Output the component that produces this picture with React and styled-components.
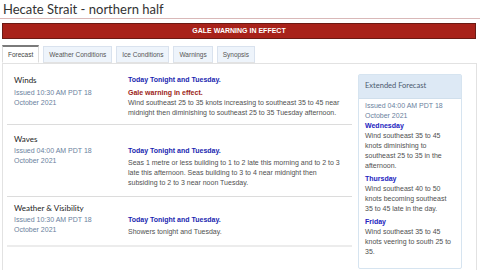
import React from "react";
import styled, { createGlobalStyle } from "styled-components";

const GlobalStyle = createGlobalStyle`
  html, body {
    margin: 0;
    padding: 0;
    background: #fff;
  }
  body {
    font-family: "Liberation Sans", Arial, sans-serif;
    width: 480px;
    height: 270px;
    overflow: hidden;
  }
`;

const tabs = ["Forecast", "Weather Conditions", "Ice Conditions", "Warnings", "Synopsis"];

const rows = [
  {
    label: "Winds",
    issued: "Issued 10:30 AM PDT 18 October 2021",
    heading: "Today Tonight and Tuesday.",
    warning: "Gale warning in effect.",
    text: "Wind southeast 25 to 35 knots increasing to southeast 35 to 45 near midnight then diminishing to southeast 25 to 35 Tuesday afternoon.",
    pad: "11px 0 6px 7px",
    gap: 3,
    offset: 0,
  },
  {
    label: "Waves",
    issued: "Issued 04:00 AM PDT 18 October 2021",
    heading: "Today Tonight and Tuesday.",
    text: "Seas 1 metre or less building to 1 to 2 late this morning and to 2 to 3 late this afternoon. Seas building to 3 to 4 near midnight then subsiding to 2 to 3 near noon Tuesday.",
    pad: "9px 0 8px 7px",
    gap: 2,
    offset: 12,
  },
  {
    label: "Weather & Visibility",
    issued: "Issued 10:30 AM PDT 18 October 2021",
    heading: "Today Tonight and Tuesday.",
    text: "Showers tonight and Tuesday.",
    pad: "6px 0 8px 7px",
    gap: 2,
    offset: 12,
    last: true,
  },
];

const extended = [
  { day: "Wednesday", text: "Wind southeast 35 to 45 knots diminishing to southeast 25 to 35 in the afternoon." },
  { day: "Thursday", text: "Wind southeast 40 to 50 knots becoming southeast 35 to 45 late in the day." },
  { day: "Friday", text: "Wind southeast 35 to 45 knots veering to south 25 to 35." },
];

export default function App() {
  return (
    <Page>
      <GlobalStyle />
      <Title>Hecate Strait - northern half</Title>
      <Banner>GALE WARNING IN EFFECT</Banner>
      <TabBar>
        {tabs.map((t, i) => (
          <Tab key={t} $active={i === 0}>{t}</Tab>
        ))}
      </TabBar>
      <Panel>
        <Rows>
          {rows.map((r) => (
            <Row key={r.label} $last={r.last} $pad={r.pad}>
              <LeftCol>
                <Label $gap={r.gap}>{r.label}</Label>
                <Issued>{r.issued}</Issued>
              </LeftCol>
              <RightCol $offset={r.offset}>
                <Heading $spaced={!r.warning}>{r.heading}</Heading>
                {r.warning && <Warning>{r.warning}</Warning>}
                <Body>{r.text}</Body>
              </RightCol>
            </Row>
          ))}
        </Rows>
        <Extended>
          <ExtHeader>Extended Forecast</ExtHeader>
          <ExtBody>
            <ExtIssued>Issued 04:00 AM PDT 18 October 2021</ExtIssued>
            {extended.map((d) => (
              <ExtDay key={d.day}>
                <DayName>{d.day}</DayName>
                <Body>{d.text}</Body>
              </ExtDay>
            ))}
          </ExtBody>
        </Extended>
      </Panel>
    </Page>
  );
}

const Page = styled.div`
  padding: 0 3px 0 2px;
`;

const Title = styled.h1`
  margin: 0 -3px 0 -2px;
  padding: 2px 0 2px 3px;
  font-family: Lato, "Liberation Sans", sans-serif;
  font-weight: 400;
  font-size: 13px;
  line-height: 14px;
  color: #333;
  border-bottom: 1px solid #d9b8b8;
`;

const Banner = styled.div`
  margin: 4px 1px 0 0;
  height: 14px;
  background: #a8221a;
  border: 1px solid #6b1a14;
  color: #fff;
  font-weight: 700;
  font-size: 7px;
  line-height: 14px;
  text-align: center;
`;

const TabBar = styled.div`
  display: flex;
  gap: 4px;
  margin-top: 6px;
  height: 19px;
`;

const Tab = styled.div`
  position: relative;
  z-index: 1;
  box-sizing: border-box;
  padding: 0 5px;
  font-size: 6.5px;
  line-height: 15px;
  color: ${(p) => (p.$active ? "#444" : "#555")};
  background: ${(p) => (p.$active ? "#fff" : "#eef4fb")};
  border: 1px solid ${(p) => (p.$active ? "#ddd" : "#d9e2ee")};
  border-top: ${(p) => (p.$active ? "2px solid #7a7a7a" : "1px solid #d9e2ee")};
  border-bottom: ${(p) => (p.$active ? "1px solid #fff" : "1px solid #e2e2e2")};
  height: ${(p) => (p.$active ? "18px" : "17px")};
  margin-top: ${(p) => (p.$active ? "0" : "1px")};
`;

const Panel = styled.div`
  display: flex;
  align-items: flex-start;
  gap: 6px;
  margin-top: -1px;
  border: 1px solid #e2e2e2;
  border-bottom: none;
  padding: 0 14px 0 4px;
  height: 220px;
  box-sizing: border-box;
`;

const Rows = styled.div`
  width: 345px;
  flex-shrink: 0;
`;

const Row = styled.div`
  display: grid;
  grid-template-columns: 114px 1fr;
  align-items: start;
  padding: ${(p) => p.$pad};
  border-bottom: ${(p) => (p.$last ? "2px solid #ececec" : "1px solid #dcdcdc")};
`;

const LeftCol = styled.div`
  display: flex;
  flex-direction: column;
`;

const Label = styled.div`
  font-family: Lato, "Liberation Sans", sans-serif;
  font-size: 8px;
  line-height: 10px;
  color: #222;
  margin-bottom: ${(p) => p.$gap}px;
`;

const Issued = styled.div`
  max-width: 96px;
  font-size: 7px;
  line-height: 10px;
  color: #6b7f9e;
`;

const RightCol = styled.div`
  margin-top: ${(p) => p.$offset}px;
  padding-right: 11px;
`;

const Heading = styled.div`
  font-weight: 700;
  font-size: 7px;
  line-height: 10px;
  color: #1a1fb0;
  margin-bottom: ${(p) => (p.$spaced ? "2px" : "0")};
`;

const Warning = styled.div`
  margin-top: 3px;
  font-weight: 700;
  font-size: 7px;
  line-height: 10px;
  color: #9c1e16;
`;

const Body = styled.div`
  font-size: 7px;
  line-height: 10px;
  color: #505050;
`;

const Extended = styled.div`
  box-sizing: border-box;
  flex-shrink: 0;
  width: 104px;
  height: 195px;
  margin-top: 10px;
  border: 1px solid #d6e4f0;
  border-radius: 2px;
`;

const ExtHeader = styled.div`
  height: 23px;
  padding: 0 6px;
  background: #dde9f5;
  border-bottom: 1px solid #d0dfec;
  font-family: Lato, "Liberation Sans", sans-serif;
  font-size: 7.5px;
  line-height: 22px;
  color: #4a5a6e;
`;

const ExtBody = styled.div`
  padding: 2px 6px 0 6px;
`;

const ExtIssued = styled(Issued)`
  max-width: none;
`;

const ExtDay = styled.div`
  & + & {
    margin-top: 3px;
  }
`;

const DayName = styled(Heading)`
  color: #2323c0;
  margin-bottom: 0;
`;
